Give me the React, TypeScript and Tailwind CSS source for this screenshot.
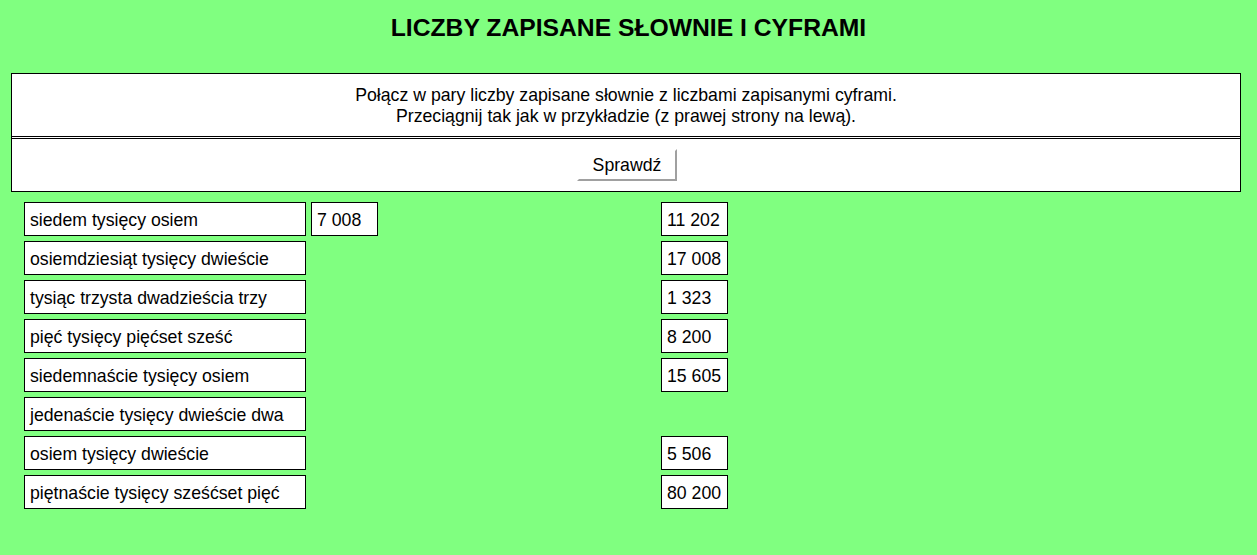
import React from "react";

type Row = { words: string; placed?: string; target?: string };

const rows: Row[] = [
  { words: "siedem tysięcy osiem", placed: "7 008", target: "11 202" },
  { words: "osiemdziesiąt tysięcy dwieście", target: "17 008" },
  { words: "tysiąc trzysta dwadzieścia trzy", target: "1 323" },
  { words: "pięć tysięcy pięćset sześć", target: "8 200" },
  { words: "siedemnaście tysięcy osiem", target: "15 605" },
  { words: "jedenaście tysięcy dwieście dwa" },
  { words: "osiem tysięcy dwieście", target: "5 506" },
  { words: "piętnaście tysięcy sześćset pięć", target: "80 200" },
];

function Cell({ text, className }: { text: string; className: string }) {
  return (
    <div
      className={`h-[34px] border border-black bg-white pl-[5px] pt-[3px] flex items-center text-[17.7px] text-black whitespace-nowrap ${className}`}
    >
      {text}
    </div>
  );
}

export default function App() {
  return (
    <div className="min-h-screen bg-[#80ff80] font-['Liberation_Sans',Arial,sans-serif] text-black pt-[16px]">
      <h1 className="text-center text-[24.7px] leading-[24px] font-bold">
        LICZBY ZAPISANE SŁOWNIE I CYFRAMI
      </h1>

      <div className="mt-[33px] ml-[11px] w-[1230px] border border-black bg-white">
        <div className="h-[63px] border-b border-black pt-[11px] text-center text-[17.7px] leading-[21px]">
          <p>Połącz w pary liczby zapisane słownie z liczbami zapisanymi cyframi.</p>
          <p>Przeciągnij tak jak w przykładzie (z prawej strony na lewą).</p>
        </div>
        <div className="mt-px h-[53px] border-t border-black flex items-center justify-center">
          <button className="ml-[2px] w-[100px] h-[32px] bg-white border-2 border-t-white border-l-white border-r-[#a0a0a0] border-b-[#a0a0a0] text-[17.7px] text-black">
            Sprawdź
          </button>
        </div>
      </div>

      <div className="mt-[10px] ml-[24px] flex flex-col gap-[5px]">
        {rows.map((r) => (
          <div key={r.words} className="flex h-[34px]">
            <Cell text={r.words} className="w-[282px]" />
            <div className="ml-[5px] w-[67px]">
              {r.placed && <Cell text={r.placed} className="w-[67px]" />}
            </div>
            <div className="ml-[283px] w-[67px]">
              {r.target && <Cell text={r.target} className="w-[67px]" />}
            </div>
          </div>
        ))}
      </div>
    </div>
  );
}
